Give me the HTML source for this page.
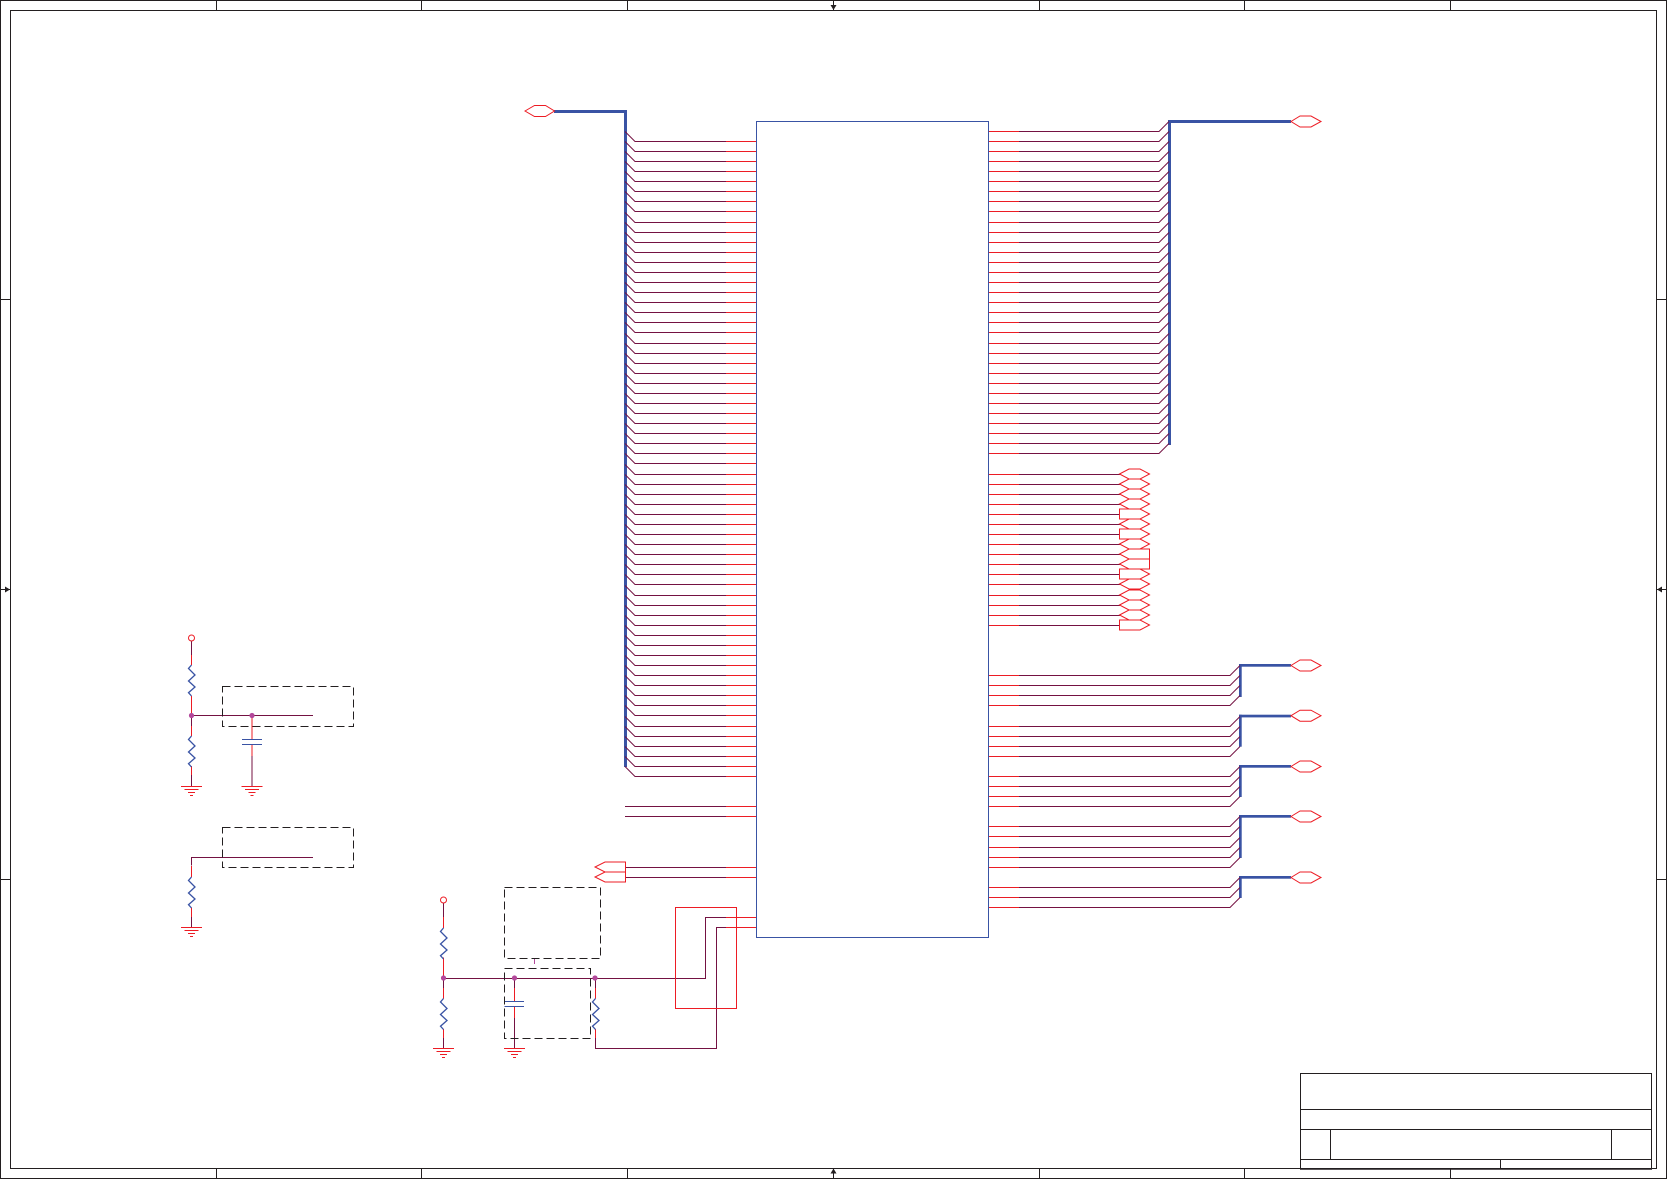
<!DOCTYPE html>
<html>
<head>
<meta charset="utf-8">
<style>
html,body{margin:0;padding:0;background:#fff}
svg{display:block}
</style>
</head>
<body>
<svg xmlns="http://www.w3.org/2000/svg" width="1667" height="1180" viewBox="0 0 1667 1180" fill="none">
<rect width="1667" height="1180" fill="#fff"/>

<!-- frame -->
<g stroke="#231f20" stroke-width="1">
<rect x="0.5" y="0.5" width="1666" height="1178"/>
<rect x="10.5" y="10.5" width="1646" height="1158"/>
<path d="M216.5 0V10M421.5 0V10M627.5 0V10M833.5 0V10M1039.5 0V10M1244.5 0V10M1450.5 0V10"/>
<path d="M216.5 1168V1178M421.5 1168V1178M627.5 1168V1178M833.5 1168V1178M1039.5 1168V1178M1244.5 1168V1178M1450.5 1168V1178"/>
<path d="M0 299.5H10M0 589.5H10M0 879.5H10M1657 299.5H1667M1657 589.5H1667M1657 879.5H1667"/>
<!-- title block -->
<rect x="1300.5" y="1073.5" width="351" height="95"/>
<path d="M1300 1109.5H1652M1300 1129.5H1652M1300 1159.5H1652M1330.5 1129V1160M1611.5 1129V1160M1500.5 1159V1169"/>
<path d="M1300 1169.2H1652"/>
</g>
<g fill="#231f20">
<path d="M830.5 5H836.5L833.5 10Z"/>
<path d="M830.5 1173.5H836.5L833.5 1168.5Z"/>
<path d="M5 586.5V592.5L10 589.5Z"/>
<path d="M1662 586.5V592.5L1657 589.5Z"/>
</g>

<!-- buses -->
<g fill="#3953a4">
<rect x="554" y="110" width="73" height="3"/>
<rect x="624" y="110" width="3" height="657"/>
<rect x="1168" y="120" width="123" height="3"/>
<rect x="1168" y="120" width="3" height="325"/>
<rect x="1239" y="664" width="52" height="2.700"/>
<rect x="1239" y="664" width="2.700" height="33"/>
<rect x="1239" y="714.700" width="52" height="2.700"/>
<rect x="1239" y="714.700" width="2.700" height="32"/>
<rect x="1239" y="765" width="52" height="2.700"/>
<rect x="1239" y="765" width="2.700" height="32"/>
<rect x="1239" y="815" width="52" height="2.700"/>
<rect x="1239" y="815" width="2.700" height="43"/>
<rect x="1239" y="876" width="52" height="2.700"/>
<rect x="1239" y="876" width="2.700" height="22"/>
</g>

<!-- maroon wires -->
<g stroke="#741242" stroke-width="1">
<path d="M625 131.5l10 10H726M625 141.5l10 10H726M625 151.5l10 10H726M625 161.5l10 10H726M625 171.5l10 10H726M625 181.5l10 10H726M625 191.5l10 10H726M625 201.5l10 10H726M625 212.5l10 10H726M625 222.5l10 10H726M625 232.5l10 10H726M625 242.5l10 10H726M625 252.5l10 10H726M625 262.5l10 10H726M625 272.5l10 10H726M625 282.5l10 10H726M625 292.5l10 10H726M625 302.5l10 10H726M625 312.5l10 10H726M625 322.5l10 10H726M625 333.5l10 10H726M625 343.5l10 10H726M625 353.5l10 10H726M625 363.5l10 10H726M625 373.5l10 10H726M625 383.5l10 10H726M625 393.5l10 10H726M625 403.5l10 10H726M625 413.5l10 10H726M625 423.5l10 10H726M625 433.5l10 10H726M625 443.5l10 10H726M625 453.5l10 10H726M625 464.5l10 10H726M625 474.5l10 10H726M625 484.5l10 10H726M625 494.5l10 10H726M625 504.5l10 10H726M625 514.5l10 10H726M625 524.5l10 10H726M625 534.5l10 10H726M625 544.5l10 10H726M625 554.5l10 10H726M625 564.5l10 10H726M625 574.5l10 10H726M625 585.5l10 10H726M625 595.5l10 10H726M625 605.5l10 10H726M625 615.5l10 10H726M625 625.5l10 10H726M625 635.5l10 10H726M625 645.5l10 10H726M625 655.5l10 10H726M625 665.5l10 10H726M625 675.5l10 10H726M625 685.5l10 10H726M625 695.5l10 10H726M625 705.5l10 10H726M625 716.5l10 10H726M625 726.5l10 10H726M625 736.5l10 10H726M625 746.5l10 10H726M625 756.5l10 10H726M625 766.5l10 10H726"/>
<path d="M625 806.5H726M625 816.5H726M625.5 867.5H726M625.5 877.5H726"/>
<path d="M1019 131.5H1159l10-10M1019 141.5H1159l10-10M1019 151.5H1159l10-10M1019 161.5H1159l10-10M1019 171.5H1159l10-10M1019 181.5H1159l10-10M1019 191.5H1159l10-10M1019 201.5H1159l10-10M1019 211.5H1159l10-10M1019 222.5H1159l10-10M1019 232.5H1159l10-10M1019 242.5H1159l10-10M1019 252.5H1159l10-10M1019 262.5H1159l10-10M1019 272.5H1159l10-10M1019 282.5H1159l10-10M1019 292.5H1159l10-10M1019 302.5H1159l10-10M1019 312.5H1159l10-10M1019 322.5H1159l10-10M1019 332.5H1159l10-10M1019 343.5H1159l10-10M1019 353.5H1159l10-10M1019 363.5H1159l10-10M1019 373.5H1159l10-10M1019 383.5H1159l10-10M1019 393.5H1159l10-10M1019 403.5H1159l10-10M1019 413.5H1159l10-10M1019 423.5H1159l10-10M1019 433.5H1159l10-10M1019 443.5H1159l10-10M1019 453.5H1159l10-10"/>
<path d="M1019 474.5H1120M1019 484.5H1120M1019 494.5H1120M1019 504.5H1120M1019 514.5H1120M1019 524.5H1120M1019 534.5H1120M1019 544.5H1120M1019 554.5H1120M1019 564.5H1120M1019 574.5H1120M1019 584.5H1120M1019 595.5H1120M1019 605.5H1120M1019 615.5H1120M1019 625.5H1120"/>
<path d="M1019 675.5H1230l10-10M1019 685.5H1230l10-10M1019 695.5H1230l10-10M1019 705.5H1230l10-10M1019 726.5H1230l10-10M1019 736.5H1230l10-10M1019 746.5H1230l10-10M1019 756.5H1230l10-10M1019 776.5H1230l10-10M1019 786.5H1230l10-10M1019 796.5H1230l10-10M1019 806.5H1230l10-10M1019 826.5H1230l10-10M1019 836.5H1230l10-10M1019 847.5H1230l10-10M1019 857.5H1230l10-10M1019 867.5H1230l10-10M1019 887.5H1230l10-10M1019 897.5H1230l10-10M1019 907.5H1230l10-10"/>
<!-- left circuits -->
<path d="M191.500 641V655M191.500 715.500V726M191.500 775V786M252 715.500V726M252 756V786M191.500 715.500H313M191.500 865.500V857.500H313M191.500 917V927"/>
<!-- bottom circuit -->
<path d="M443.500 903V917M443.500 978.500V988M443.500 1038V1048M514.500 978.500V988M514.500 1018V1048M595.500 978.500V988"/>
<path d="M443.500 978.500H705.500V917.500H726M595.500 1038V1048.500H716.500V927.500H726"/>
</g>

<!-- red wires -->
<g stroke="#ed1c24" stroke-width="1">
<path d="M726 141.5H756M726 151.5H756M726 161.5H756M726 171.5H756M726 181.5H756M726 191.5H756M726 201.5H756M726 211.5H756M726 222.5H756M726 232.5H756M726 242.5H756M726 252.5H756M726 262.5H756M726 272.5H756M726 282.5H756M726 292.5H756M726 302.5H756M726 312.5H756M726 322.5H756M726 332.5H756M726 343.5H756M726 353.5H756M726 363.5H756M726 373.5H756M726 383.5H756M726 393.5H756M726 403.5H756M726 413.5H756M726 423.5H756M726 433.5H756M726 443.5H756M726 453.5H756M726 463.5H756M726 474.5H756M726 484.5H756M726 494.5H756M726 504.5H756M726 514.5H756M726 524.5H756M726 534.5H756M726 544.5H756M726 554.5H756M726 564.5H756M726 574.5H756M726 584.5H756M726 595.5H756M726 605.5H756M726 615.5H756M726 625.5H756M726 635.5H756M726 645.5H756M726 655.5H756M726 665.5H756M726 675.5H756M726 685.5H756M726 695.5H756M726 705.5H756M726 715.5H756M726 726.5H756M726 736.5H756M726 746.5H756M726 756.5H756M726 766.5H756M726 776.5H756M726 806.5H756M726 816.5H756M726 867.5H756M726 877.5H756M726 917.5H756M726 927.5H756"/>
<path d="M989 131.5H1019M989 141.5H1019M989 151.5H1019M989 161.5H1019M989 171.5H1019M989 181.5H1019M989 191.5H1019M989 201.5H1019M989 211.5H1019M989 222.5H1019M989 232.5H1019M989 242.5H1019M989 252.5H1019M989 262.5H1019M989 272.5H1019M989 282.5H1019M989 292.5H1019M989 302.5H1019M989 312.5H1019M989 322.5H1019M989 332.5H1019M989 343.5H1019M989 353.5H1019M989 363.5H1019M989 373.5H1019M989 383.5H1019M989 393.5H1019M989 403.5H1019M989 413.5H1019M989 423.5H1019M989 433.5H1019M989 443.5H1019M989 453.5H1019M989 474.5H1019M989 484.5H1019M989 494.5H1019M989 504.5H1019M989 514.5H1019M989 524.5H1019M989 534.5H1019M989 544.5H1019M989 554.5H1019M989 564.5H1019M989 574.5H1019M989 584.5H1019M989 595.5H1019M989 605.5H1019M989 615.5H1019M989 625.5H1019M989 675.5H1019M989 685.5H1019M989 695.5H1019M989 705.5H1019M989 726.5H1019M989 736.5H1019M989 746.5H1019M989 756.5H1019M989 776.5H1019M989 786.5H1019M989 796.5H1019M989 806.5H1019M989 826.5H1019M989 836.5H1019M989 847.5H1019M989 857.5H1019M989 867.5H1019M989 887.5H1019M989 897.5H1019M989 907.5H1019"/>

<!-- top-level hex ports -->
<path d="M525 111l9.500-5.500h11l9 5.500l-9 5.500h-11z"/>
<path d="M1291 121.500l9-5.500h11l10 5.500l-10 5.500h-11z"/>
<path d="M1291 665.500l9-5.500h11l10 5.500l-10 5.500h-11z"/>
<path d="M1291 715.700l9-5.500h11l10 5.500l-10 5.500h-11z"/>
<path d="M1291 766.500l9-5.500h11l10 5.500l-10 5.500h-11z"/>
<path d="M1291 816.500l9-5.500h11l10 5.500l-10 5.500h-11z"/>
<path d="M1291 877.500l9-5.500h11l10 5.500l-10 5.500h-11z"/>

<!-- middle ports -->
<path d="M1119.500 474l9.500-5h11l9.500 5l-9.500 5h-11z"/>
<path d="M1119.500 484l9.500-5h11l9.500 5l-9.500 5h-11z"/>
<path d="M1119.500 494l9.500-5h11l9.500 5l-9.500 5h-11z"/>
<path d="M1119.500 504l9.500-5h11l9.500 5l-9.500 5h-11z"/>
<path d="M1119.500 509h20.500l9.500 5l-9.500 5h-20.500z"/>
<path d="M1119.500 524l9.500-5h11l9.500 5l-9.500 5h-11z"/>
<path d="M1119.500 529h20.500l9.500 5l-9.500 5h-20.500z"/>
<path d="M1119.500 544l9.500-5h11l9.500 5l-9.500 5h-11z"/>
<path d="M1149.500 549h-20.500l-9.500 5l9.500 5h20.500z"/>
<path d="M1149.500 559h-20.500l-9.500 5l9.500 5h20.500z"/>
<path d="M1119.500 569h20.500l9.500 5l-9.500 5h-20.500z"/>
<path d="M1119.500 584l9.500-5h11l9.500 5l-9.500 5h-11z"/>
<path d="M1119.500 595l9.500-5h11l9.500 5l-9.500 5h-11z"/>
<path d="M1119.500 605l9.500-5h11l9.500 5l-9.500 5h-11z"/>
<path d="M1119.500 615l9.500-5h11l9.500 5l-9.500 5h-11z"/>
<path d="M1119.500 620h20.500l9.500 5l-9.500 5h-20.500z"/>

<!-- left-pointing connectors -->
<path d="M625.500 862h-20.500l-10 5l10 5h20.500z"/>
<path d="M625.500 872h-20.500l-10 5l10 5h20.500z"/>

<!-- red box -->
<rect x="675.500" y="907.500" width="61" height="101"/>

<!-- circuit reds -->
<circle cx="191.500" cy="638" r="3"/>
<path d="M191.500 655V665M191.500 696V715M191.500 726V736M191.500 766V775M252 715.500V739M252 745V756"/>
<path d="M191.500 866V877M191.500 907.500V917"/>
<circle cx="443.500" cy="900" r="3"/>
<path d="M443.500 917V928M443.500 957.500V978M443.500 988V998.500M443.500 1029V1038M514.500 988V1001M514.500 1006.500V1018M595.500 988V998.500M595.500 1029V1038"/>

<!-- grounds -->
<path d="M181 786.500H202M184.500 789.500H198.500M188 792.500H195M190 795.500H193"/>
<path d="M241.500 786.500H262.500M245 789.500H259M248.500 792.500H255.500M250.500 795.500H253.500"/>
<path d="M181 927.500H202M184.500 930.500H198.500M188 933.500H195M190 936.500H193"/>
<path d="M433 1048.500H454M436.500 1051.500H450.500M440 1054.500H447M442 1057.500H445"/>
<path d="M504 1048.500H525M507.500 1051.500H521.500M511 1054.500H518M513 1057.500H516"/>
</g>

<!-- chip -->
<rect x="756.500" y="121.500" width="232" height="816" stroke="#3953a4" stroke-width="1"/>

<!-- passive parts -->
<g stroke="#3953a4" stroke-width="1.300">
<path d="M191.500 665l-3 3.500l6.500 6.500l-6.500 6l6.500 6l-6.500 5.700l3 3.300"/>
<path d="M191.500 736l-3 3.500l6.500 6.500l-6.500 6l6.500 6l-6.500 5.700l3 3.300"/>
<path d="M191.500 877l-3 3.500l6.500 6.500l-6.500 6l6.500 6l-6.500 5.700l3 3.300"/>
<path d="M443.500 928l-3 3.500l6.500 6.500l-6.500 6l6.500 6l-6.500 5.700l3 3.300"/>
<path d="M443.500 998.500l-3 3.500l6.500 6.500l-6.500 6l6.500 6l-6.500 5.700l3 3.300"/>
<path d="M595.500 998.500l-3 3.500l6.500 6.500l-6.500 6l6.500 6l-6.500 5.700l3 3.300"/>
</g>
<g stroke="#3953a4" stroke-width="1">
<path d="M242 739.500H262M242 744.500H262"/>
<path d="M504.500 1001.500H524M504.500 1006.500H524"/>
</g>

<!-- junctions -->
<g fill="#b3489b">
<circle cx="191.500" cy="715.500" r="2.600"/>
<circle cx="252" cy="715.500" r="2.600"/>
<circle cx="443.500" cy="978" r="2.600"/>
<circle cx="514.500" cy="978" r="2.600"/>
<circle cx="595" cy="978" r="2.600"/>
</g>
<path d="M534.500 958V964" stroke="#b3489b" stroke-width="1"/>

<!-- dashed boxes -->
<g stroke="#231f20" stroke-width="1" stroke-dasharray="8 4">
<rect x="222.500" y="686.500" width="131" height="40"/>
<rect x="222.500" y="827.500" width="131" height="40"/>
<rect x="504.500" y="887.500" width="96" height="71"/>
<rect x="504.500" y="968.500" width="86" height="70"/>
</g>
</svg>
</body>
</html>
